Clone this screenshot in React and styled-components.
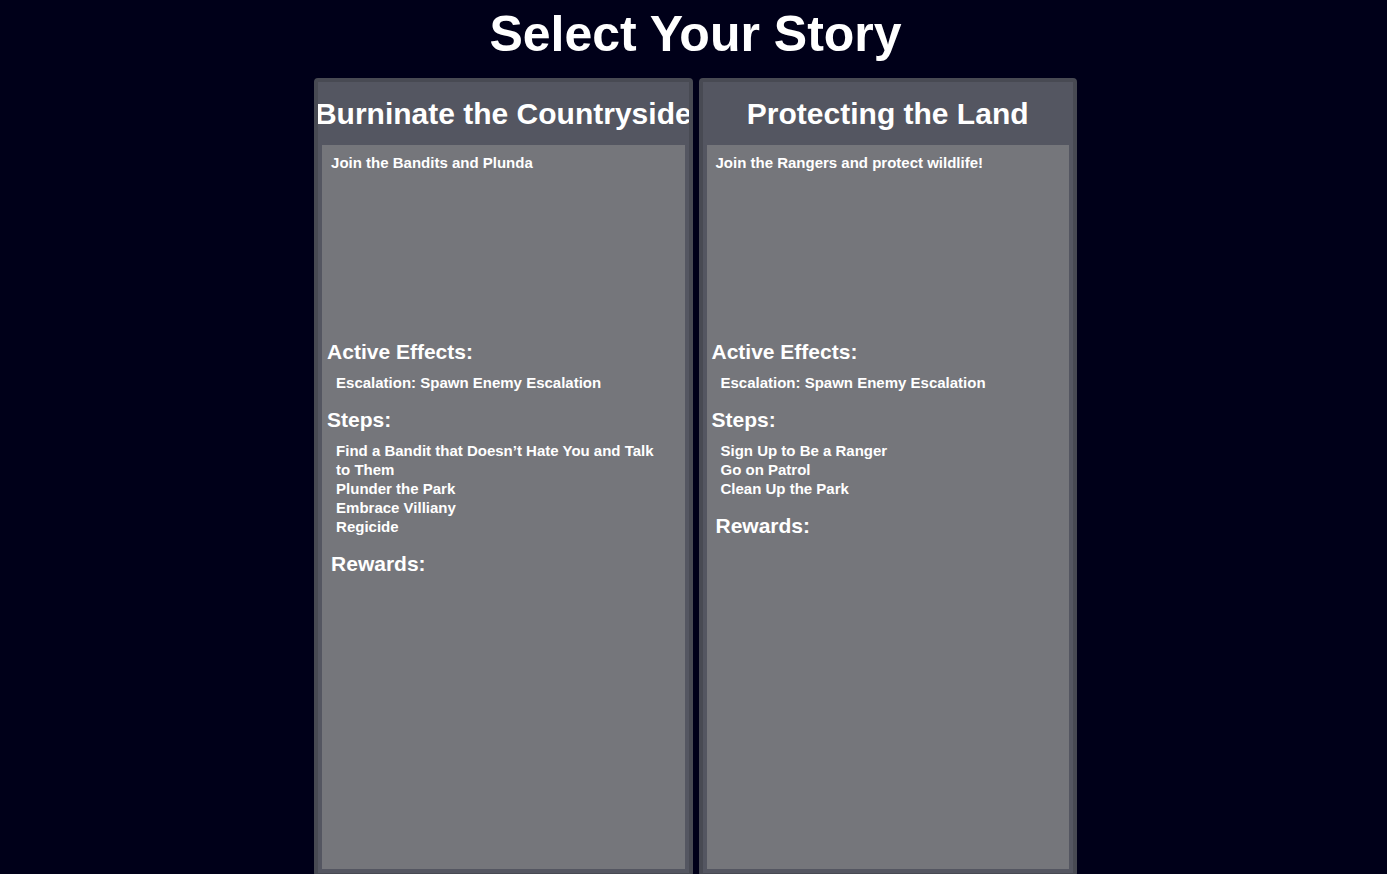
import React from "react";
import styled, { createGlobalStyle } from "styled-components";

const GlobalStyle = createGlobalStyle`
  *, *::before, *::after { box-sizing: border-box; }
  html { background: #000019; scrollbar-width: none; }
  body {
    margin: 0;
    color: #fff;
    font-family: "Liberation Sans", Arial, sans-serif;
    font-size: 15px;
    font-weight: 700;
    line-height: 19px;
  }
  h1, h2, h3, p, ul { margin: 0; padding: 0; font-weight: 700; }
`;

const Page = styled.main`
  display: flex;
  flex-direction: column;
  align-items: center;
  min-height: calc(100vh + 3px);
  padding-left: 4px;
`;

const PageTitle = styled.h1`
  padding: 6px 0 16px;
  font-size: 50px;
  line-height: 56px;
`;

const StoryGrid = styled.div`
  flex: 1;
  display: grid;
  grid-template-columns: repeat(2, minmax(0, 1fr));
  gap: 6px;
  width: 55vw;
`;

const StoryCard = styled.article`
  display: flex;
  flex-direction: column;
  padding: 0 4px 4px;
  border: 4px solid #484a53;
  border-radius: 4px;
  background: #545661;
`;

const StoryTitle = styled.h2`
  display: flex;
  align-items: center;
  justify-content: center;
  height: 63px;
  margin: 0 -4px;
  overflow: hidden;
  font-size: 30px;
  line-height: 36px;
  white-space: nowrap;
`;

const StoryBody = styled.div`
  flex: 1;
  padding: 8px 5px;
  background: #75767b;
`;

const Description = styled.p`
  min-height: 184px;
  padding: 0 4px;
`;

const Section = styled.section`
  padding-left: ${({ $inset }) => ($inset ? "4px" : "0")};
  margin-bottom: 13px;
`;

const SectionTitle = styled.h3`
  padding-bottom: 7px;
  font-size: 21px;
  line-height: 29px;
`;

const EntryList = styled.ul`
  padding: 0 9px;
  list-style: none;
`;

const stories = [
  {
    title: "Burninate the Countryside",
    description: "Join the Bandits and Plunda",
    effects: ["Escalation: Spawn Enemy Escalation"],
    steps: [
      "Find a Bandit that Doesn’t Hate You and Talk to Them",
      "Plunder the Park",
      "Embrace Villiany",
      "Regicide",
    ],
  },
  {
    title: "Protecting the Land",
    description: "Join the Rangers and protect wildlife!",
    effects: ["Escalation: Spawn Enemy Escalation"],
    steps: ["Sign Up to Be a Ranger", "Go on Patrol", "Clean Up the Park"],
  },
];

function Entries({ title, items }) {
  return (
    <Section>
      <SectionTitle>{title}</SectionTitle>
      <EntryList>
        {items.map((item) => (
          <li key={item}>{item}</li>
        ))}
      </EntryList>
    </Section>
  );
}

export default function App() {
  return (
    <>
      <GlobalStyle />
      <Page>
        <PageTitle>Select Your Story</PageTitle>
        <StoryGrid>
          {stories.map((story) => (
            <StoryCard key={story.title}>
              <StoryTitle><span>{story.title}</span></StoryTitle>
              <StoryBody>
                <Description>{story.description}</Description>
                <Entries title="Active Effects:" items={story.effects} />
                <Entries title="Steps:" items={story.steps} />
                <Section $inset>
                  <SectionTitle>Rewards:</SectionTitle>
                </Section>
              </StoryBody>
            </StoryCard>
          ))}
        </StoryGrid>
      </Page>
    </>
  );
}
